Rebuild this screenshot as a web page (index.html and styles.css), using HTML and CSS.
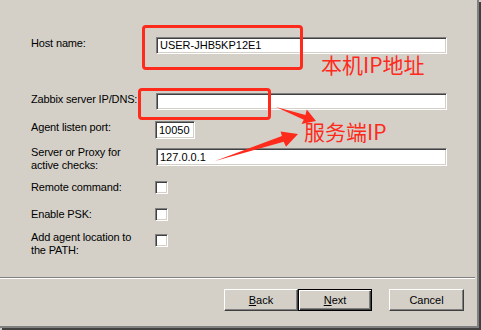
FILE: index.html
```html
<!DOCTYPE html>
<html>
<head>
<meta charset="utf-8">
<link rel="stylesheet" href="styles.css">
</head>
<body>
<div class="frame">
  <div class="window">
    <div class="form">
      <div class="row r1">
        <label class="lbl">Host name:</label>
        <div class="field wide">USER-JHB5KP12E1</div>
      </div>
      <div class="row r2">
        <label class="lbl">Zabbix server IP/DNS:</label>
        <div class="field wide"></div>
      </div>
      <div class="row r3">
        <label class="lbl">Agent listen port:</label>
        <div class="field port">10050</div>
      </div>
      <div class="row r4">
        <label class="lbl up2">Server or Proxy for<br>active checks:</label>
        <div class="field wide">127.0.0.1</div>
      </div>
      <div class="row r5">
        <label class="lbl">Remote command:</label>
        <div class="check"></div>
      </div>
      <div class="row r6">
        <label class="lbl">Enable PSK:</label>
        <div class="check"></div>
      </div>
      <div class="row r7">
        <label class="lbl up3">Add agent location to<br>the PATH:</label>
        <div class="check"></div>
      </div>
    </div>
    <div class="sep"></div>
    <div class="buttons">
      <div class="btn"><u>B</u>ack</div>
      <div class="btn default"><u>N</u>ext</div>
      <div class="btn cancel">Cancel</div>
    </div>
  </div>

  <div class="mark box1"></div>
  <div class="mark box2"></div>
  <div class="note note1">本机IP地址</div>
  <div class="note note2">服务端IP</div>
  <svg class="arrows" width="481" height="330" viewBox="0 0 481 330">
    <polygon points="276,107 305.4,114.9 306.8,109.5 316,121 301.5,124 303.8,119.7" fill="#fe2a1c"/>
    <polygon points="215,161 281.9,136 280.6,131.6 298,134 286,146.8 283.7,141.8" fill="#fe2a1c"/>
  </svg>
</div>
</body>
</html>
```

FILE: styles.css
```css
html, body {
  margin: 0;
  padding: 0;
  background: #d4d0c8;
}

body {
  font-family: "Liberation Sans", Arial, sans-serif;
  font-size: 11px;
  color: #000;
}

.frame {
  position: relative;
  width: 481px;
  height: 330px;
  overflow: hidden;
}

.window {
  width: 477px;
  height: 326px;
  border-right: 2px solid #808080;
  border-bottom: 2px solid #808080;
  box-shadow: 2px 2px 0 0 #404040;
  display: flex;
  flex-direction: column;
}

.form {
  height: 277px;
  padding-top: 37px;
  padding-left: 31px;
  box-sizing: border-box;
}

.row {
  display: flex;
  align-items: flex-start;
}

.r1 { height: 17px; }
.r2 { height: 17px; margin-top: 39px; }
.r3 { height: 18px; margin-top: 11px; }
.r4 { height: 18px; margin-top: 9px; }
.r5 { height: 13px; margin-top: 15px; }
.r6 { height: 13px; margin-top: 14px; }
.r7 { height: 13px; margin-top: 13px; }

.lbl {
  width: 124px;
  flex: none;
  line-height: 13px;
  white-space: nowrap;
  letter-spacing: -0.15px;
}

.up2 { margin-top: -2px; }
.up3 { margin-top: -3px; }

.field {
  box-sizing: border-box;
  background: #fff;
  border-top: 1px solid #808080;
  border-left: 1px solid #808080;
  border-right: 1px solid #fff;
  border-bottom: 1px solid #fff;
  box-shadow: inset 1px 1px 0 #404040, inset -1px -1px 0 #d4d0c8;
  padding-left: 3px;
  line-height: 15px;
  white-space: nowrap;
}

.wide {
  width: 291px;
  height: 17px;
  margin-left: 1px;
}

.r4 .wide,
.r3 .field {
  height: 18px;
  line-height: 16px;
}

.port {
  width: 40px;
}

.check {
  box-sizing: border-box;
  width: 13px;
  height: 13px;
  background: #fff;
  border-top: 1px solid #808080;
  border-left: 1px solid #808080;
  border-right: 1px solid #fff;
  border-bottom: 1px solid #fff;
  box-shadow: inset 1px 1px 0 #404040, inset -1px -1px 0 #d4d0c8;
}

.sep {
  width: 475px;
  height: 0;
  border-top: 1px solid #808080;
  border-bottom: 1px solid #fff;
}

.buttons {
  display: flex;
  justify-content: flex-end;
  padding-top: 10px;
  padding-right: 13px;
}

.btn {
  box-sizing: border-box;
  width: 74px;
  height: 22px;
  background: #d4d0c8;
  border-top: 1px solid #fff;
  border-left: 1px solid #fff;
  border-right: 1px solid #404040;
  border-bottom: 1px solid #404040;
  box-shadow: inset -1px -1px 0 #808080;
  text-align: center;
  line-height: 20px;
}

.btn.default {
  border: 1px solid #000;
  box-shadow: inset 1px 1px 0 #fff, inset -1px -1px 0 #404040, inset -2px -2px 0 #808080;
}

.btn.cancel {
  margin-left: 17px;
  width: 75px;
}

.mark {
  position: absolute;
  box-sizing: border-box;
  border: 3px solid #fe2a1c;
  border-radius: 4px;
}

.box1 {
  left: 142px;
  top: 25px;
  width: 161px;
  height: 45px;
}

.box2 {
  left: 138px;
  top: 88px;
  width: 133px;
  height: 32px;
}

.note {
  position: absolute;
  color: #fe2a1c;
  font-family: "Noto Sans CJK SC", sans-serif;
  white-space: nowrap;
  line-height: 1;
}

.note1 {
  left: 321px;
  top: 54px;
  font-size: 21px;
}

.note2 {
  left: 304px;
  top: 121px;
  font-size: 21px;
}

.arrows {
  position: absolute;
  left: 0;
  top: 0;
  pointer-events: none;
}
```
